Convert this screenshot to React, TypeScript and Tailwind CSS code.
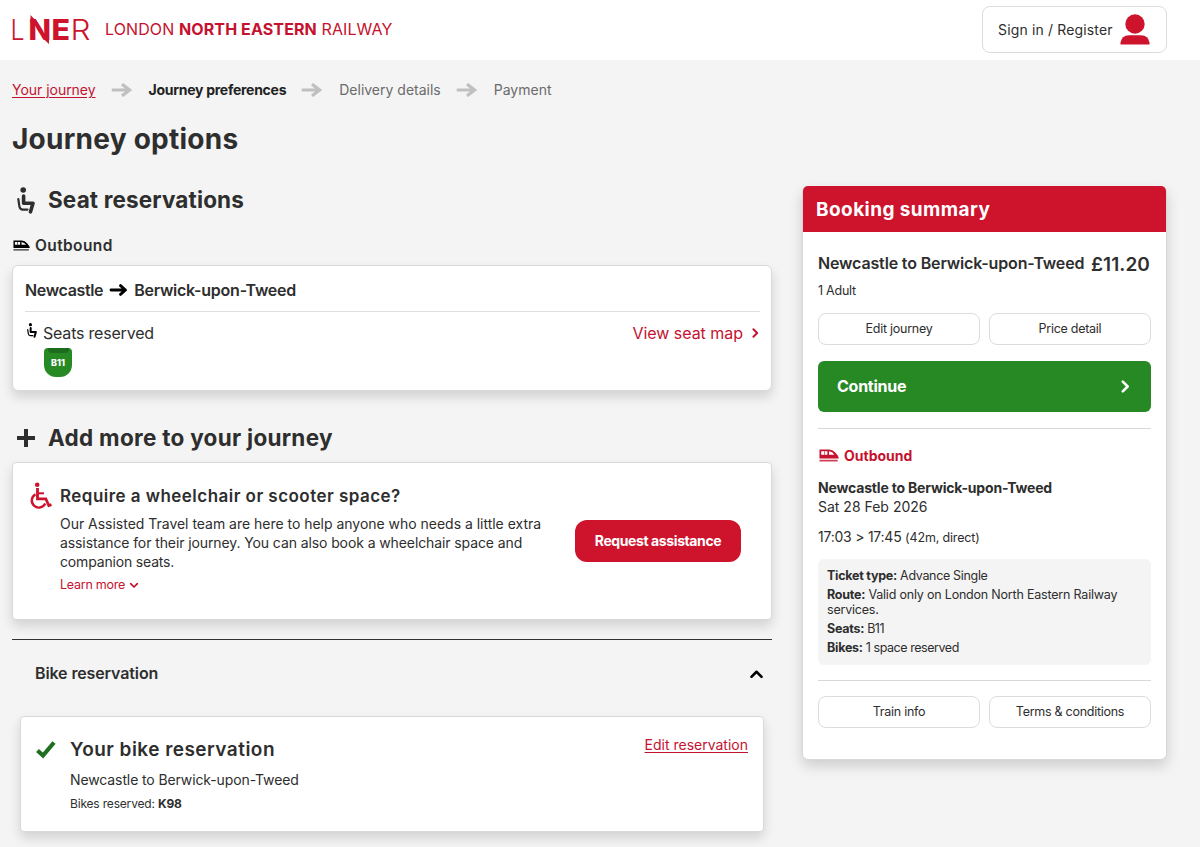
import { ReactNode } from "react";

type IconProps = {
  className?: string;
};

type Step = {
  label: string;
  className: string;
};

type TicketRow = {
  label: string;
  value: string;
  className: string;
};

const steps: Step[] = [
  { label: "Your journey", className: "text-[#c4122f] underline underline-offset-2 tracking-[-0.03px]" },
  { label: "Journey preferences", className: "font-bold text-[#222] tracking-[-0.27px]" },
  { label: "Delivery details", className: "text-[#6b6b6b] tracking-[0px]" },
  { label: "Payment", className: "text-[#6b6b6b] tracking-[0px]" },
];

const ticketRows: TicketRow[] = [
  { label: "Ticket type:", value: "Advance Single", className: "mb-1 tracking-[-0.33px]" },
  { label: "Route:", value: "Valid only on London North Eastern Railway services.", className: "mb-1 tracking-[-0.2px]" },
  { label: "Seats:", value: "B11", className: "mb-1 tracking-[-0.5px]" },
  { label: "Bikes:", value: "1 space reserved", className: "tracking-[-0.45px]" },
];

function Logo() {
  return (
    <svg width="80" height="32" viewBox="0 0 80 32" className="shrink-0 overflow-visible" fill="#ce132d" fontFamily="Inter, sans-serif" fontSize="28">
      <text x="-1.5" y="26" fontWeight="300" textLength="14" lengthAdjust="spacingAndGlyphs">L</text>
      <text x="16.5" y="26" fontWeight="800" textLength="22.5" lengthAdjust="spacingAndGlyphs">N</text>
      <polygon points="18.5,1 26,9 18.5,9" />
      <polygon points="29.5,23 37,23 37,30" />
      <text x="39.5" y="26" fontWeight="800" textLength="18.5" lengthAdjust="spacingAndGlyphs">E</text>
      <text x="58.5" y="26" fontWeight="300" textLength="20" lengthAdjust="spacingAndGlyphs">R</text>
    </svg>
  );
}

function SeatIcon({ className }: IconProps) {
  return (
    <svg viewBox="0 0 18 27" className={className} fill="none" stroke="currentColor" strokeLinecap="round" strokeLinejoin="round">
      <circle cx="6.2" cy="3" r="2.8" fill="currentColor" stroke="none" />
      <path d="M6.600 9v7.200h9.400l-2.500 8.600" strokeWidth="3.6" />
      <path d="M1.300 12l1.100 7.400q.5 3.200 3.400 3.200h4.700" strokeWidth="2.2" />
    </svg>
  );
}

function TrainIcon({ className }: IconProps) {
  return (
    <svg viewBox="0 0 20 13" className={className} fill="currentColor">
      <path fillRule="evenodd" d="M.5 .5h9.800q3.800.3 6.200 3.200l2.400 3q.8 1 .8 2.800H.5zM2.200 2.300v3.400h6.200V2.300zM10 2.300v3.400h5.400q-1.800-3-5.400-3.400z" />
      <path d="M5 2.300h.8v3.400H5zM.5 10.800h18.200v1.700H.5z" opacity=".8" />
    </svg>
  );
}

function WheelchairIcon({ className }: IconProps) {
  return (
    <svg viewBox="0 0 22 28" className={className} fill="none" stroke="currentColor">
      <circle cx="7.2" cy="2.7" r="2.3" fill="currentColor" stroke="none" />
      <path d="M7.500 6v10.800h8.300l3 6.700 2.700-.9" strokeWidth="2.8" />
      <path d="M8 11.300h6" strokeWidth="2" />
      <path d="M5.500 12.400a7 7 0 1 0 9.700 9" strokeWidth="2.4" />
    </svg>
  );
}

function ArrowIcon({ className }: IconProps) {
  return (
    <svg viewBox="0 0 22 15" className={className} fill="none" stroke="currentColor" strokeWidth="3.4">
      <path d="M0 7.500h19M11 1.200l8.200 6.300-8.200 6.300" />
    </svg>
  );
}

function BoldArrowIcon({ className }: IconProps) {
  return (
    <svg viewBox="0 0 18 12" className={className} fill="none" stroke="currentColor" strokeWidth="2.8" strokeLinecap="round" strokeLinejoin="round">
      <path d="M1.500 6h14M11 1.600L16 6l-5 4.400" />
    </svg>
  );
}

function ChevronIcon({ className }: IconProps) {
  return (
    <svg viewBox="0 0 8 12" className={className} fill="none" stroke="currentColor" strokeWidth="2.3" strokeLinecap="round" strokeLinejoin="round">
      <path d="M1.500 1.500L6 6l-4.500 4.500" />
    </svg>
  );
}

function OutlineButton({ children }: { children: ReactNode }) {
  return (
    <button className="flex h-8 flex-1 items-center justify-center rounded-lg border border-[#dcdcdc] bg-white text-[12.5px] tracking-[-0.27px] text-[#2e2e2e]">
      {children}
    </button>
  );
}

function Header() {
  return (
    <header className="flex h-[60px] items-center bg-white pl-3 pr-[33px]">
      <Logo />
      <div className="ml-[13px] pb-[3px] text-[16px] text-[#c4122f] tracking-[0.11px]">
        LONDON <span className="font-bold">NORTH EASTERN</span> RAILWAY
      </div>
      <button className="mb-[2px] ml-auto flex h-[47px] w-[185px] items-center rounded-lg border border-[#dcdcdc] pl-[15px] text-[14px] text-[#2e2e2e]">
        <span className="tracking-[0.15px]">Sign in / Register</span>
        <svg width="30" height="31" viewBox="0 0 30 31" fill="#ce132d" className="ml-auto mr-4">
          <circle cx="15" cy="10" r="9.7" />
          <path d="M.5 30.500v-2Q1.500 21.500 9 21.200h12q7.500.3 8.500 7.300v2z" />
        </svg>
      </button>
    </header>
  );
}

function Breadcrumbs() {
  return (
    <nav className="flex h-5 items-center text-[14px] leading-5">
      {steps.map((step, index) => (
        <div key={step.label} className="flex items-center">
          {index > 0 && <ArrowIcon className="ml-[15px] mr-4 h-[14px] w-[22px] text-[#c0c0c0]" />}
          <span className={step.className}>{step.label}</span>
        </div>
      ))}
    </nav>
  );
}

function SeatCard() {
  return (
    <div className="mt-2 h-[126px] rounded-md border border-[#d9d9d9] bg-white pl-3 pr-[11px] shadow-[0_6px_12px_rgba(0,0,0,0.14)]">
      <div className="flex h-[46px] items-center border-b border-[#dedede] pt-[3px] text-[16px] font-semibold">
        <span className="tracking-[-0.35px]">Newcastle</span>
        <BoldArrowIcon className="mx-[6px] h-3 w-[19px] text-black" />
        <span className="tracking-[-0.25px]">Berwick-upon-Tweed</span>
      </div>
      <div className="mt-[10px] flex h-[21px] items-center text-[16px]">
        <SeatIcon className="mb-1 ml-[2px] mr-[6px] h-[15px] w-[10px] text-black" />
        <span className="tracking-[-0.2px]">Seats reserved</span>
        <a className="ml-auto flex items-center text-[#c4122f]">
          <span className="tracking-[-0.03px]">View seat map</span>
          <ChevronIcon className="ml-[9px] mr-[1px] h-[10px] w-[7px]" />
        </a>
      </div>
      <div className="ml-[19px] mt-[5px] flex h-[29px] w-[28px] flex-col items-center rounded-b-[12px] rounded-t-[4px] bg-[#278924] text-[9px] font-extrabold text-white">
        <div className="h-[5px] w-[21px] rounded-b-[4px] bg-[#1d6b1d]" />
        <span className="leading-5">B11</span>
      </div>
    </div>
  );
}

function AssistanceCard() {
  return (
    <div className="mt-2 flex h-[158px] rounded border border-[#d9d9d9] bg-white pl-4 pr-[30px] shadow-[0_6px_12px_rgba(0,0,0,0.14)]">
      <WheelchairIcon className="ml-[1px] mt-[19px] h-7 w-[22px] shrink-0 text-[#ce132d]" />
      <div className="ml-2 w-[500px] pt-[22px]">
        <h3 className="text-[17px] font-semibold leading-[22px] tracking-[0.46px]">Require a wheelchair or scooter space?</h3>
        <p className="mt-[7px] text-[14px] leading-[19px] tracking-[-0.02px]">
          Our Assisted Travel team are here to help anyone who needs a little extra
          <br />
          <span className="tracking-[-0.1px]">assistance for their journey. You can also book a wheelchair space and</span>
          <br />
          <span className="tracking-[-0.17px]">companion seats.</span>
        </p>
        <a className="mt-[5px] flex h-[18px] items-center text-[12.5px] tracking-[-0.25px] text-[#c4122f]">
          Learn more
          <ChevronIcon className="ml-[6px] h-[9px] w-[6px] rotate-90" />
        </a>
      </div>
      <button className="ml-auto mt-[57px] h-[42px] w-[166px] shrink-0 rounded-xl bg-[#ce132d] pb-px text-[14px] font-bold tracking-[-0.4px] text-white">
        Request assistance
      </button>
    </div>
  );
}

function BikeCard() {
  return (
    <div className="mx-2 mt-[9px] flex h-[116px] rounded border border-[#d9d9d9] bg-white px-[15px] shadow-[0_6px_12px_rgba(0,0,0,0.14)]">
      <svg width="20" height="18" viewBox="0 0 20 18" className="mt-6 shrink-0">
        <path d="M1.500 9.500l5.500 5L18 1.500" fill="none" stroke="#1f6f20" strokeWidth="4.2" />
      </svg>
      <div className="ml-[14px] pt-[21px]">
        <h3 className="text-[19px] font-semibold leading-6 tracking-[0.47px]">Your bike reservation</h3>
        <p className="mt-2 text-[14px] leading-5 tracking-[-0.11px]">Newcastle to Berwick-upon-Tweed</p>
        <p className="mt-1 text-[12px] leading-5 tracking-[-0.18px]">
          Bikes reserved: <b>K98</b>
        </p>
      </div>
      <a className="ml-auto mt-[18px] h-5 text-[14px] leading-5 text-[#c4122f] underline underline-offset-2">Edit reservation</a>
    </div>
  );
}

function BookingSummary() {
  return (
    <aside className="mt-8 h-[574px] w-[365px] rounded-md border border-t-0 border-[#d9d9d9] bg-white shadow-[0_6px_14px_rgba(0,0,0,0.16)]">
      <h2 className="h-[46px] rounded-t-[5px] bg-[#ce132d] pl-[13px] text-[19px] font-bold leading-[47px] tracking-[0.42px] text-white">Booking summary</h2>
      <div className="px-[15px]">
        <div className="mt-5 flex h-[23px] items-start justify-between font-semibold">
          <span className="text-[16px] leading-[23px] tracking-[-0.15px]">Newcastle to Berwick-upon-Tweed</span>
          <span className="pr-px pt-px text-[19px] leading-[23px] tracking-[0.1px]">£11.20</span>
        </div>
        <p className="mt-[6px] text-[12.5px] leading-5 tracking-[-0.25px]">1 Adult</p>
        <div className="mt-[12px] flex gap-[9px]">
          <OutlineButton>Edit journey</OutlineButton>
          <OutlineButton>Price detail</OutlineButton>
        </div>
        <button className="mt-4 flex h-[51px] w-full items-center justify-between rounded-md bg-[#278924] pl-[19px] pr-[21px] text-[16px] font-bold text-white">
          <span className="pb-[2px] tracking-[-0.25px]">Continue</span>
          <ChevronIcon className="h-[13px] w-[9px]" />
        </button>
        <div className="mt-4 border-t border-[#d5d9d9]" />
        <div className="mt-[15px] flex h-[22px] items-center text-[14px] font-bold text-[#c4122f]">
          <TrainIcon className="ml-[1px] mr-[5px] h-[13px] w-[20px]" />
          Outbound
        </div>
        <p className="mt-[12px] text-[14px] font-bold leading-[19px] tracking-[-0.18px]">Newcastle to Berwick-upon-Tweed</p>
        <p className="text-[14px] leading-[19px] tracking-[0px]">Sat 28 Feb 2026</p>
        <p className="mt-[11px] text-[14px] leading-[19px] tracking-[-0.24px]">
          17:03 &gt; 17:45 <span className="text-[12.5px] tracking-[-0.16px]">(42m, direct)</span>
        </p>
        <div className="mt-3 h-[106px] rounded-md bg-[#f4f4f4] px-[9px] pt-[9px] text-[12.5px] leading-[15px]">
          {ticketRows.map((row) => (
            <p key={row.label} className={row.className}>
              <b className="tracking-[-0.25px]">{row.label}</b> {row.value}
            </p>
          ))}
        </div>
        <div className="mt-[15px] border-t border-[#d5d9d9]" />
        <div className="mt-[15px] flex gap-[9px]">
          <OutlineButton>Train info</OutlineButton>
          <OutlineButton>Terms &amp; conditions</OutlineButton>
        </div>
      </div>
    </aside>
  );
}

export default function App() {
  return (
    <div className="h-[847px] w-[1200px] overflow-hidden bg-[#f4f4f4] font-['Inter',sans-serif] text-[#2e2e2e]">
      <Header />
      <div className="pl-3 pt-5">
        <Breadcrumbs />
        <h1 className="mt-[23px] text-[28px] font-bold leading-8 tracking-[0.25px]">Journey options</h1>

        <div className="-mt-px flex items-start">
          <main className="mr-[30px] w-[760px] shrink-0">
            <div className="mt-[30px] flex h-8 items-center">
              <SeatIcon className="ml-[5px] mr-[13px] h-[27px] w-[18px]" />
              <h2 className="text-[22.5px] font-bold tracking-[0.14px]">Seat reservations</h2>
            </div>
            <div className="mt-[18px] flex h-[23px] items-center text-[15.5px] font-semibold">
              <TrainIcon className="ml-[1px] mr-[5px] h-[11px] w-[17px] text-black" />
              <span className="tracking-[0.38px]">Outbound</span>
            </div>
            <SeatCard />

            <div className="mt-[30px] flex h-[33px] items-center">
              <svg width="18" height="18" viewBox="0 0 18 18" className="ml-[5px] mr-[13px]">
                <path d="M9 0v18M0 9h18" stroke="currentColor" strokeWidth="4" />
              </svg>
              <h2 className="text-[22.5px] font-bold tracking-[0.28px]">Add more to your journey</h2>
            </div>
            <AssistanceCard />

            <div className="mt-[19px] border-t border-[#333]">
              <div className="flex h-[67px] items-center justify-between pl-[23px] pr-[11px] text-[16px] font-semibold">
                <span className="pb-[2px] tracking-[-0.12px]">Bike reservation</span>
                <ChevronIcon className="h-[14px] w-[9px] -rotate-90 text-black" />
              </div>
              <BikeCard />
            </div>
          </main>
          <BookingSummary />
        </div>
      </div>
    </div>
  );
}
